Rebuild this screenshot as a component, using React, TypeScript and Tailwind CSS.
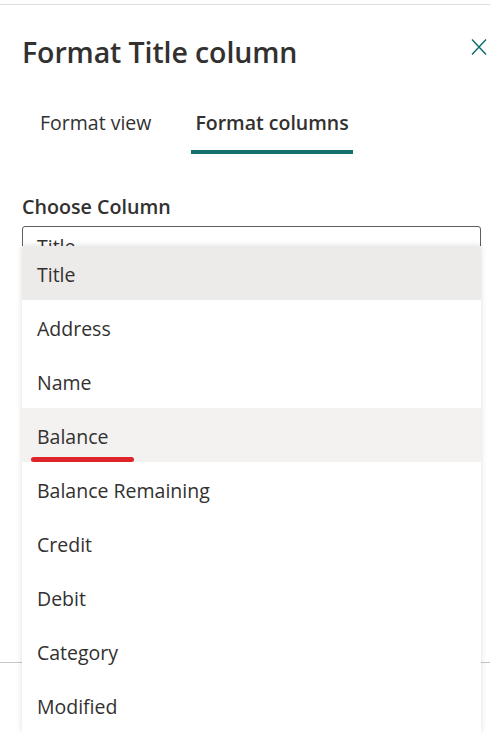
import React from "react";

const items = [
  "Title",
  "Address",
  "Name",
  "Balance",
  "Balance Remaining",
  "Credit",
  "Debit",
  "Category",
  "Modified",
];

export default function App() {
  return (
    <div
      className="w-[490px] h-[732px] overflow-hidden bg-white text-[#323130] flex flex-col"
      style={{ fontFamily: '"Open Sans", "Noto Sans", sans-serif' }}
    >
      <div className="h-[4px] shrink-0" />
      <div className="h-px bg-[#e1dfdd] shrink-0" />
      <div className="flex items-start justify-between pl-[22px] pr-[3px] pt-[30px]">
        <h1 className="text-[28.5px] font-semibold leading-[34px] tracking-[-0.1px]">Format Title column</h1>
        <button className="mt-[3px] text-[#0b6a6b]" aria-label="Close">
          <svg width="16" height="18" viewBox="0 0 16 18" fill="none" stroke="currentColor" strokeWidth="1.4">
            <path d="M1 1.5 L15 16.5 M15 1.5 L1 16.5" />
          </svg>
        </button>
      </div>
      <div className="flex pl-[22px] mt-[23px] gap-[22px]">
        <div className="px-[18px] h-[62px] flex items-center text-[19.5px] text-[#323130]">Format view</div>
        <div className="relative px-[4px] h-[62px] flex items-center text-[19.5px] font-semibold">
          Format columns
          <div className="absolute left-0 right-0 bottom-0 h-[4px] bg-[#13706f]" />
        </div>
      </div>
      <div className="pl-[22px] pr-[9px] mt-[39px]">
        <div className="text-[19.7px] font-semibold leading-[28px]">Choose Column</div>
        <div className="relative mt-[5px]">
          <div className="h-[32px] border border-[#605e5c] rounded-[3px] pl-[14px] pt-[6px] text-[19.5px] leading-[28px] overflow-hidden">
            Title
          </div>
          <div className="absolute left-0 right-0 top-[20px] z-10 bg-white shadow-[0_0_6px_rgba(0,0,0,0.14)]">
            {items.map((it) => (
              <div
                key={it}
                className={
                  "relative h-[54px] flex items-center pl-[15px] pt-[3px] text-[19.5px] " +
                  (it === "Title" ? "bg-[#edebe9]" : it === "Balance" ? "bg-[#f3f2f1]" : "bg-white")
                }
              >
                {it}
                {it === "Balance" && (
                  <div className="absolute left-[9px] top-[49px] w-[103px] h-[5px] rounded-full bg-[#e0242c]" />
                )}
              </div>
            ))}
          </div>
        </div>
      </div>
      <div className="flex-1" />
      <div className="h-[70px] shrink-0 border-t border-[#c8c6c4]" />
    </div>
  );
}
